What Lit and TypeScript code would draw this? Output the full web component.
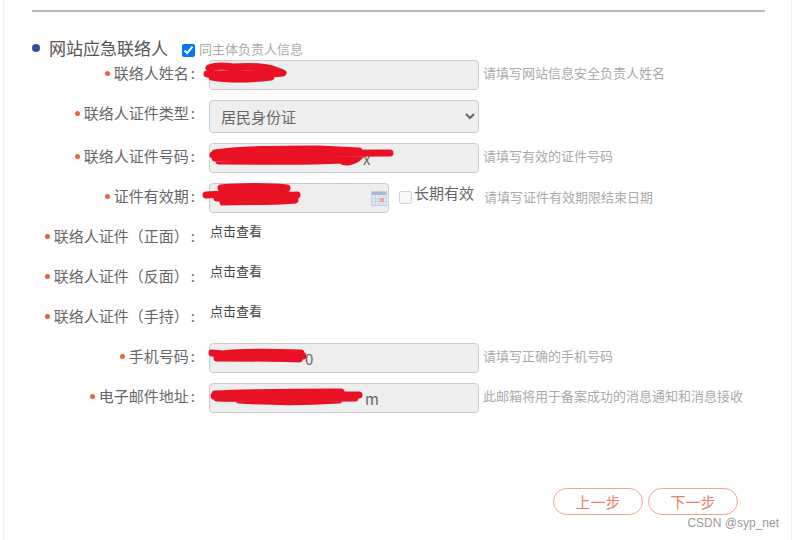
import { LitElement, html, css, svg } from 'lit';
import { customElement } from 'lit/decorators.js';

type Row = {
  label: string;
  kind: 'input' | 'select' | 'date' | 'link';
  value?: string;
  indent?: number;
  hint?: string;
  scribble?: string;
};

const rows: Row[] = [
  {
    label: '联络人姓名',
    kind: 'input',
    hint: '请填写网站信息安全负责人姓名',
    scribble:
      'M0 8 C8 5 16 6 24 7 C40 6 58 7 66 10 L74 13 C55 15 30 13 -2 14 C14 15 40 14 62 17 C45 19 20 20 3 17',
  },
  { label: '联络人证件类型', kind: 'select' },
  {
    label: '联络人证件号码',
    kind: 'input',
    value: 'x',
    indent: 141,
    hint: '请填写有效的证件号码',
    scribble:
      'M6 10 C30 6 70 6 110 6 L150 8 M4 12 C50 11 100 10 181 10 M6 15 C50 16 110 15 152 12 M10 18 C60 18 100 19 132 17 C136 21 146 18 150 14',
  },
  {
    label: '证件有效期',
    kind: 'date',
    hint: '请填写证件有效期限结束日期',
    scribble:
      'M12 5 C30 3 60 3 78 5 M14 9 C40 7 60 8 76 9 M-3 12 C20 10 50 10 80 12 M8 15 C30 13 60 14 88 12 M14 19 C40 18 70 19 86 17',
  },
  { label: '联络人证件（正面）', kind: 'link' },
  { label: '联络人证件（反面）', kind: 'link' },
  { label: '联络人证件（手持）', kind: 'link' },
  {
    label: '手机号码',
    kind: 'input',
    value: '0',
    indent: 83,
    hint: '请填写正确的手机号码',
    scribble:
      'M3 10 L14 11 C30 9 60 9 92 10 M10 13 C40 12 70 12 94 13 M8 15 C40 15 70 15 90 16',
  },
  {
    label: '电子邮件地址',
    kind: 'input',
    value: 'm',
    indent: 143,
    hint: '此邮箱将用于备案成功的消息通知和消息接收',
    scribble:
      'M6 11 C40 9 90 9 132 9 M5 13 C50 11 110 12 150 12 M8 15 C50 16 110 15 146 15 M30 17 C60 19 100 19 130 17',
  },
];

@customElement('app-root')
export class AppRoot extends LitElement {
  static override styles = css`
    :host {
      display: block;
      width: 795px;
      height: 540px;
      overflow: hidden;
      background: #fff;
      font-family: 'Noto Sans CJK SC', 'Noto Sans', sans-serif;
      color: #666;
    }

    .page {
      position: relative;
      box-sizing: border-box;
      height: 540px;
      margin-left: 3px;
      margin-right: 3px;
      padding: 10px 26px 0 28px;
      border-left: 1px solid #f0f0f0;
      border-right: 1px solid #f0f0f0;
    }

    .rule {
      height: 2px;
      background: #b4b8bf;
    }

    .title-row {
      display: flex;
      align-items: center;
      height: 22px;
      margin-top: 25px;
      margin-bottom: 1px;
    }

    .dot {
      width: 8px;
      height: 8px;
      border-radius: 50%;
      background: #3a4a9f;
      margin-right: 9px;
    }

    .title {
      font-size: 17px;
      line-height: 22px;
      color: #555;
      width: 133px;
    }

    .title-row input {
      width: 13px;
      height: 13px;
      margin: 4px 4px 0 0;
    }

    .same {
      font-size: 13px;
      color: #aaa;
    }

    .form {
      display: flex;
      flex-direction: column;
      gap: 10px;
    }

    .row {
      display: flex;
      align-items: flex-start;
      min-height: 30px;
    }

    .label {
      flex: none;
      width: 163px;
      text-align: right;
      font-size: 15px;
      line-height: 25px;
      color: #666;
      white-space: nowrap;
    }

    .star {
      display: inline-block;
      width: 5px;
      height: 5px;
      margin-right: 4px;
      border-radius: 50%;
      background: #f0603f;
      vertical-align: 3px;
    }

    .colon {
      margin-left: 2px;
    }

    .field {
      position: relative;
      flex: none;
      margin-left: 14px;
    }

    .control {
      box-sizing: border-box;
      display: block;
      width: 270px;
      height: 30px;
      padding: 0 12px;
      border: 1px solid #ccc;
      border-radius: 4px;
      background: #eee;
      font: inherit;
      font-size: 15px;
      color: #666;
      outline: none;
    }

    select.control {
      height: 33px;
      padding-left: 7px;
    }

    .date {
      width: 180px;
    }

    .scribble {
      position: absolute;
      left: 0;
      top: 0;
      overflow: visible;
      fill: none;
      stroke: #e81224;
      stroke-width: 7;
      stroke-linecap: round;
      stroke-linejoin: round;
      pointer-events: none;
    }

    .calendar {
      position: absolute;
      right: 2px;
      top: 8px;
    }

    .forever {
      display: flex;
      align-items: flex-start;
      flex: none;
      margin-left: 10px;
      font-size: 15px;
      line-height: 19px;
      color: #666;
    }

    .forever input {
      width: 13px;
      height: 13px;
      margin: 8px 2px 0 0;
    }

    .hint {
      flex: none;
      margin-left: 4px;
      font-size: 13px;
      line-height: 26px;
      color: #aaa;
    }

    .forever + .hint {
      margin-left: 10px;
      line-height: 28px;
    }

    .link {
      font-size: 13px;
      line-height: 16px;
      color: #444;
      margin-left: 15px;
    }

    .actions {
      display: flex;
      justify-content: flex-end;
      gap: 5px;
      margin-top: 75px;
      margin-right: 27px;
    }

    button {
      box-sizing: border-box;
      width: 90px;
      height: 27px;
      padding: 0;
      border: 1px solid #f5a08c;
      border-radius: 14px;
      background: #fff;
      font: inherit;
      font-size: 15px;
      color: #ee7f68;
    }

    .watermark {
      position: absolute;
      right: 12px;
      bottom: 10px;
      font-family: 'Liberation Sans', sans-serif;
      font-size: 12px;
      color: #999;
    }
  `;

  private renderScribble(d?: string) {
    if (!d) return '';
    return html`<svg class="scribble" width="10" height="10">${svg`<path d=${d}></path>`}</svg>`;
  }

  private renderCalendar() {
    return html`
      <svg class="calendar" width="16" height="15" viewBox="0 0 16 15">
        <rect x="0.5" y="0.5" width="15" height="14" fill="#dfe7f1" stroke="#c3cfe0"></rect>
        <rect x="1" y="1" width="14" height="3" fill="#a3b7d6"></rect>
        <path d="M1 7.5H15M1 10.5H15M4.5 4V14M8 4V14M11.5 4V14" stroke="#c6d3e5" fill="none"></path>
        <rect x="9" y="7" width="4" height="4" fill="#f0a68c"></rect>
      </svg>
    `;
  }

  private renderControl(row: Row) {
    if (row.kind === 'select') {
      return html`
        <div class="field">
          <select class="control">
            <option>居民身份证</option>
          </select>
        </div>
      `;
    }
    if (row.kind === 'link') {
      return html`<div class="link">点击查看</div>`;
    }
    return html`
      <div class="field">
        <input
          class="control ${row.kind === 'date' ? 'date' : ''}"
          .value=${row.value ?? ''}
          style=${row.indent ? `padding-left:${row.indent + 12}px` : ''}
        />
        ${row.kind === 'date' ? this.renderCalendar() : ''}
        ${this.renderScribble(row.scribble)}
      </div>
    `;
  }

  override render() {
    return html`
      <div class="page">
        <div class="rule"></div>
        <div class="title-row">
          <span class="dot"></span>
          <span class="title">网站应急联络人</span>
          <input type="checkbox" checked />
          <span class="same">同主体负责人信息</span>
        </div>
        <div class="form">
          ${rows.map(
            (row) => html`
              <div class="row">
                <div class="label"><span class="star"></span>${row.label}<span class="colon">:</span></div>
                ${this.renderControl(row)}
                ${row.kind === 'date'
                  ? html`<label class="forever"><input type="checkbox" disabled />长期有效</label>`
                  : ''}
                ${row.hint ? html`<div class="hint">${row.hint}</div>` : ''}
              </div>
            `,
          )}
        </div>
        <div class="actions">
          <button>上一步</button>
          <button>下一步</button>
        </div>
        <div class="watermark">CSDN @syp_net</div>
      </div>
    `;
  }
}

declare global {
  interface HTMLElementTagNameMap {
    'app-root': AppRoot;
  }
}
